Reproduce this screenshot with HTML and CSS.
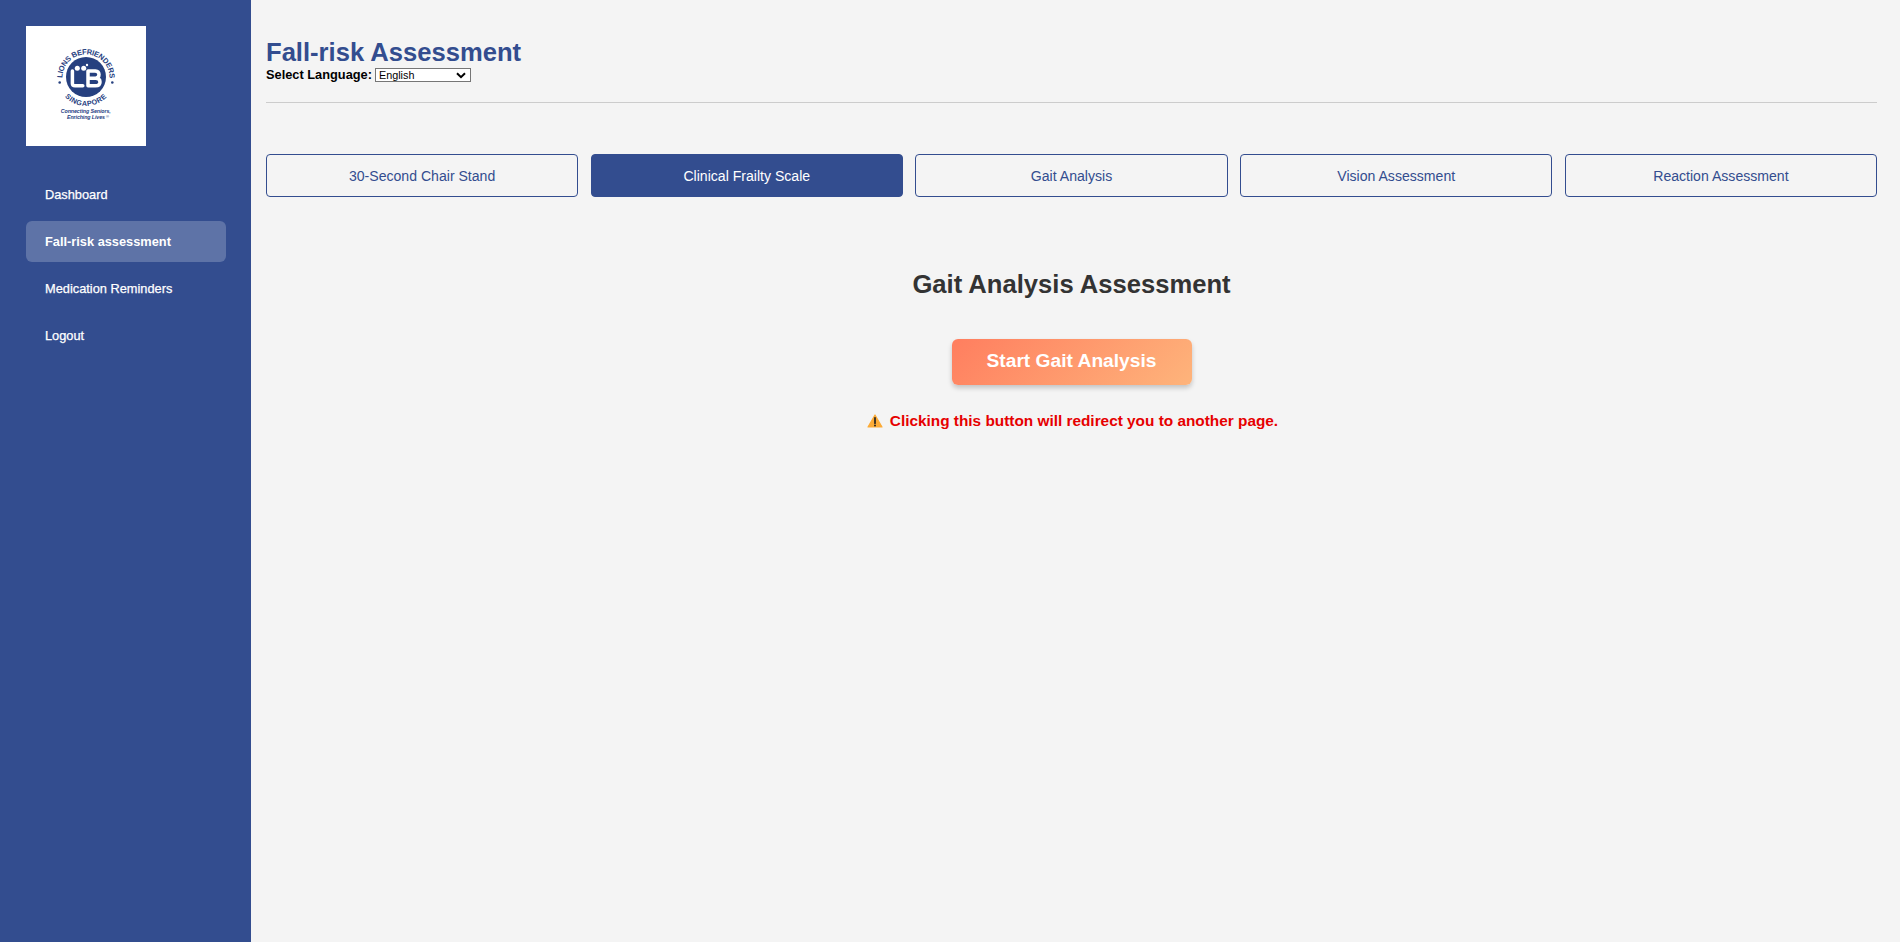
FILE: index.html
```html
<!DOCTYPE html>
<html lang="en">
<head>
<meta charset="utf-8">
<title>Fall-risk Assessment</title>
<link rel="stylesheet" href="styles.css">
</head>
<body>
<div class="layout">
  <aside class="sidebar">
    <svg class="logo" viewBox="0 0 120 120" role="img" aria-label="Lions Befrienders Singapore">
      <defs>
        <path id="arc-top" d="M36.4 52A23.6 23.6 0 1 1 83.6 52"/>
        <path id="arc-bottom" d="M39 70.7A28.4 28.4 0 0 0 81 70.7"/>
      </defs>
      <rect width="120" height="120" fill="#fff"/>
      <circle cx="60" cy="51" r="20" fill="#26407f"/>
      <g fill="none" stroke="#fff" stroke-width="3.5" stroke-linecap="round" stroke-linejoin="round">
        <path d="M46.4 45V57.5Q46.4 59.8 49 59.8H56.8"/>
        <path d="M62 45V59.8H69.5Q74 59.8 74 56T69.7 52.2H62M69.7 52.2Q73 51.8 73 48.6T69.3 45H62"/>
      </g>
      <circle cx="51.3" cy="42.2" r="2.5" fill="#fff"/>
      <circle cx="57.7" cy="42.2" r="2.5" fill="#fff"/>
      <circle cx="61" cy="39" r="1.2" fill="#fff"/>
      <circle cx="33.7" cy="56.5" r="1.3" fill="#26407f"/>
      <circle cx="86.3" cy="56.5" r="1.3" fill="#26407f"/>
      <text class="logo-name"><textPath href="#arc-top" textLength="74">LIONS BEFRIENDERS</textPath></text>
      <text class="logo-name logo-place"><textPath href="#arc-bottom" textLength="46.5">SINGAPORE</textPath></text>
      <text class="logo-motto" x="34.8" y="86.8" textLength="50">Connecting Seniors,</text>
      <text class="logo-motto" x="41" y="93.2" textLength="38">Enriching Lives</text>
      <text class="logo-mark" x="80" y="92">®</text>
    </svg>
    <nav class="nav">
      <a class="nav-item">Dashboard</a>
      <a class="nav-item nav-item-active">Fall-risk assessment</a>
      <a class="nav-item">Medication Reminders</a>
      <a class="nav-item">Logout</a>
    </nav>
  </aside>
  <main class="content">
    <header class="header">
      <h1 class="title">Fall-risk Assessment</h1>
      <div class="language">
        <label class="language-label" for="language">Select Language:</label>
        <div class="language-select" id="language">English
          <svg class="chevron" viewBox="0 0 10 7"><path d="M1 1.2L5 5.2L9 1.2" fill="none" stroke="#000" stroke-width="2"/></svg>
        </div>
      </div>
    </header>
    <div class="tabs">
      <button class="tab">30-Second Chair Stand</button>
      <button class="tab tab-active">Clinical Frailty Scale</button>
      <button class="tab">Gait Analysis</button>
      <button class="tab">Vision Assessment</button>
      <button class="tab">Reaction Assessment</button>
    </div>
    <section class="assessment">
      <h2 class="assessment-title">Gait Analysis Assessment</h2>
      <button class="start">Start Gait Analysis</button>
      <p class="warning">
        <svg class="warning-icon" viewBox="0 0 16 14"><path d="M8 1L15 13H1Z" fill="#fcab36" stroke="#fcab36" stroke-width="1.2" stroke-linejoin="round"/><path d="M8 3.8V9.2" stroke="#222" stroke-width="1.7" stroke-linecap="round"/><circle cx="8" cy="11.5" r="1" fill="#222"/></svg>
        <span>Clicking this button will redirect you to another page.</span>
      </p>
    </section>
  </main>
</div>
</body>
</html>
```
FILE: styles.css
```css
* { box-sizing: border-box; }
body {
  margin: 0;
  background: #f4f4f4;
  font-family: "Liberation Sans", Arial, sans-serif;
  color: #000;
}
.layout { display: flex; height: 942px; }
.sidebar {
  width: 251px;
  flex: none;
  padding: 26px 25px 0 26px;
  background: #334d8f;
}
.logo { display: block; width: 120px; height: 120px; }
.logo-name { font-size: 7.5px; font-weight: bold; fill: #26407f; }
.logo-place { font-size: 7.2px; }
.logo-motto { font-size: 5.3px; font-weight: bold; font-style: italic; fill: #26407f; }
.logo-mark { font-size: 4px; fill: #26407f; }
.nav { display: flex; flex-direction: column; gap: 6px; margin-top: 28px; }
.nav-item {
  height: 41px;
  padding-left: 19px;
  border-radius: 6px;
  color: #fff;
  font-size: 12.8px;
  line-height: 41px;
  -webkit-text-stroke: 0.25px #fff;
}
.nav-item-active {
  background: #5e73a7;
  font-weight: bold;
  -webkit-text-stroke: 0;
}
.content { flex: 1; padding: 37px 23px 0 15px; }
.header { height: 66px; border-bottom: 1px solid #ccc; }
.title { margin: 0; color: #334d8f; font-size: 25.6px; line-height: 30px; }
.language { display: flex; align-items: center; gap: 3px; height: 15px; }
.language-label { font-size: 12.8px; font-weight: bold; line-height: 15px; }
.language-select {
  display: flex;
  align-items: center;
  justify-content: space-between;
  width: 96px;
  height: 14px;
  margin-top: 1px;
  padding: 0 4px 0 3px;
  border: 1px solid #767676;
  background: #fff;
  font-size: 10.8px;
  line-height: 12px;
}
.chevron { width: 10px; height: 7px; }
.tabs { display: flex; gap: 12.5px; margin-top: 51px; }
.tab {
  flex: 1;
  height: 43px;
  padding: 0;
  border: 1px solid #334d8f;
  border-radius: 4px;
  background: transparent;
  color: #334d8f;
  font: 14.08px "Liberation Sans", Arial, sans-serif;
}
.tab-active { background: #334d8f; color: #fff; }
.assessment { display: flex; flex-direction: column; align-items: center; padding-top: 72px; }
.assessment-title { margin: 0; color: #333; font-size: 25.6px; line-height: 30px; }
.start {
  width: 240px;
  height: 46px;
  margin-top: 40px;
  padding: 0 0 2px;
  border: 0;
  border-radius: 6px;
  background: linear-gradient(135deg, #ff7e5f, #feb47b);
  box-shadow: 0 3px 5px rgba(0, 0, 0, 0.2);
  color: #fff;
  font: bold 19.2px "Liberation Sans", Arial, sans-serif;
}
.warning {
  display: flex;
  align-items: center;
  gap: 7px;
  margin: 28px 0 0;
  padding-left: 2px;
  color: #e60000;
  font-size: 15.36px;
  font-weight: bold;
  line-height: 16px;
}
.warning-icon { width: 16px; height: 14px; }
```
